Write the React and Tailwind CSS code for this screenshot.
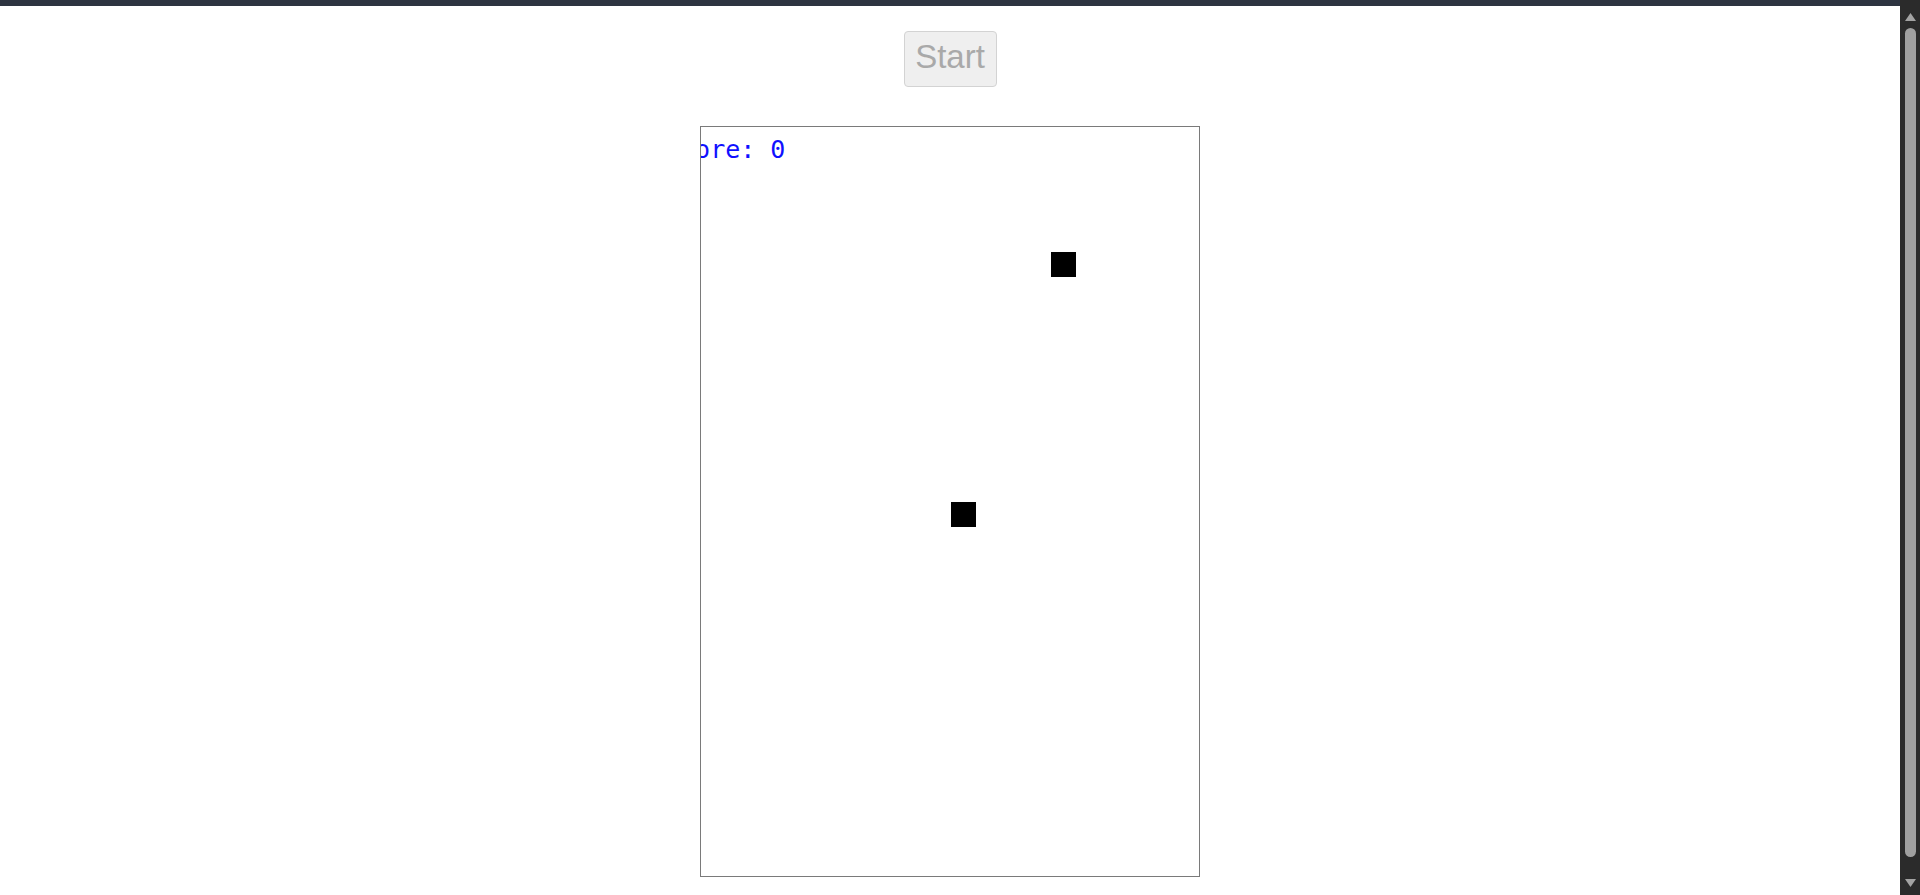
const Block = ({ x, y }) => (
  <div
    className="absolute w-[25px] h-[25px] bg-black"
    style={{ left: x, top: y }}
  />
)

const Scrollbar = () => (
  <div className="relative w-[20px] h-full bg-[#2b2b2b] shrink-0">
    <svg className="absolute left-[5px] top-[13px]" width="11" height="8" viewBox="0 0 11 8">
      <path d="M5.5 0 L11 8 L0 8 Z" fill="#a3a3a3" />
    </svg>
    <div className="absolute left-[5px] top-[28px] w-[11px] h-[829px] rounded-full bg-[#a0a0a0]" />
    <svg className="absolute left-[5px] top-[879px]" width="11" height="8" viewBox="0 0 11 8">
      <path d="M0 0 L11 0 L5.5 8 Z" fill="#a3a3a3" />
    </svg>
  </div>
)

export default function App() {
  const blocks = [
    { x: 350, y: 125 },
    { x: 250, y: 375 },
  ]

  return (
    <div className="flex w-full h-[895px] overflow-hidden bg-white">
      <div className="flex-1 flex flex-col">
        <div className="h-[6px] bg-[#2e3441]" />
        <div className="flex flex-col items-center">
          <button
            disabled
            className="mt-[25px] w-[93px] h-[56px] flex justify-center pt-[6px] bg-[#efefef] border border-[#d3d3d3] rounded-[4px] text-[#a9a9a9] text-[33px] leading-[38px] font-['Liberation_Sans',Arial,sans-serif]"
          >
            Start
          </button>
          <div className="relative mt-[39px] w-[500px] h-[751px] border border-[#7a7a7a] overflow-hidden">
            <div className="absolute left-[-36px] top-[10px] text-[25px] leading-[25px] text-[#1010ff] whitespace-pre font-['DejaVu_Sans_Mono',monospace]">
              Score: 0
            </div>
            {blocks.map((b, i) => (
              <Block key={i} x={b.x} y={b.y} />
            ))}
          </div>
        </div>
      </div>
      <Scrollbar />
    </div>
  )
}
